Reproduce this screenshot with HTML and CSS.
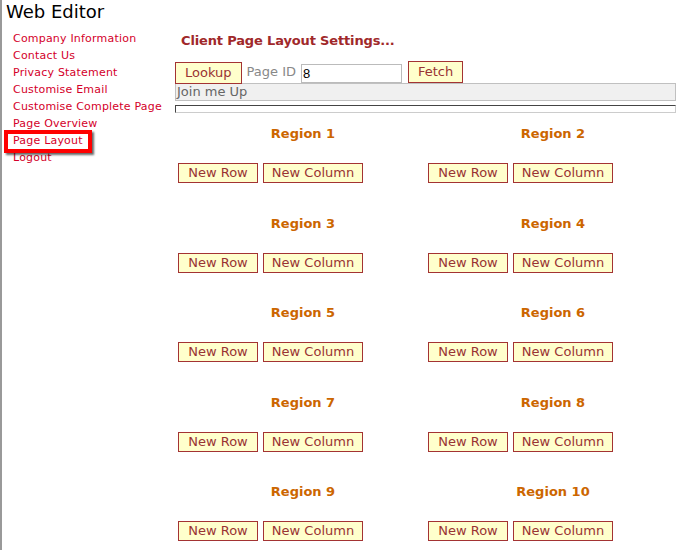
FILE: index.html
```html
<!DOCTYPE html>
<html lang="en">
<head>
  <meta charset="UTF-8">
  <title>Web Editor</title>
  <link rel="stylesheet" href="styles.css">
</head>
<body>
  <div class="page">
    <h1 class="site-title">Web Editor</h1>

    <div class="layout">
      <!-- side menu -->
      <ul class="menu">
        <li><a href="#">Company Information</a></li>
        <li><a href="#">Contact Us</a></li>
        <li><a href="#">Privacy Statement</a></li>
        <li><a href="#">Customise Email</a></li>
        <li><a href="#">Customise Complete Page</a></li>
        <li><a href="#">Page Overview</a></li>
        <li><a href="#" class="marked">Page Layout</a></li>
        <li><a href="#">Logout</a></li>
      </ul>

      <div class="main">
        <h2 class="heading">Client Page Layout Settings...</h2>

        <div class="toolbar">
          <button class="btn btn-lookup">Lookup</button>
          <span class="label">Page ID</span>
          <input class="page-id" type="text" value="8">
          <button class="btn btn-fetch">Fetch</button>
        </div>

        <div class="page-name">Join me Up</div>
        <div class="preview"></div>

        <!-- regions -->
        <div class="regions">
          <div class="region">
            <h3>Region 1</h3>
            <div class="region-btns"><button class="btn btn-row">New Row</button><button class="btn btn-col">New Column</button></div>
          </div>
          <div class="region">
            <h3>Region 2</h3>
            <div class="region-btns"><button class="btn btn-row">New Row</button><button class="btn btn-col">New Column</button></div>
          </div>
          <div class="region">
            <h3>Region 3</h3>
            <div class="region-btns"><button class="btn btn-row">New Row</button><button class="btn btn-col">New Column</button></div>
          </div>
          <div class="region">
            <h3>Region 4</h3>
            <div class="region-btns"><button class="btn btn-row">New Row</button><button class="btn btn-col">New Column</button></div>
          </div>
          <div class="region">
            <h3>Region 5</h3>
            <div class="region-btns"><button class="btn btn-row">New Row</button><button class="btn btn-col">New Column</button></div>
          </div>
          <div class="region">
            <h3>Region 6</h3>
            <div class="region-btns"><button class="btn btn-row">New Row</button><button class="btn btn-col">New Column</button></div>
          </div>
          <div class="region">
            <h3>Region 7</h3>
            <div class="region-btns"><button class="btn btn-row">New Row</button><button class="btn btn-col">New Column</button></div>
          </div>
          <div class="region">
            <h3>Region 8</h3>
            <div class="region-btns"><button class="btn btn-row">New Row</button><button class="btn btn-col">New Column</button></div>
          </div>
          <div class="region">
            <h3>Region 9</h3>
            <div class="region-btns"><button class="btn btn-row">New Row</button><button class="btn btn-col">New Column</button></div>
          </div>
          <div class="region">
            <h3>Region 10</h3>
            <div class="region-btns"><button class="btn btn-row">New Row</button><button class="btn btn-col">New Column</button></div>
          </div>
        </div>
      </div>
    </div>
  </div>
</body>
</html>
```

FILE: styles.css
```css
html, body {
  margin: 0;
  padding: 0;
  background-color: #fff;
  font-family: 'DejaVu Sans', Verdana, sans-serif;
}

.page {
  border-left: 2px solid #999;
  min-height: 550px;
  box-sizing: border-box;
}

.site-title {
  margin: 0;
  padding: 1px 0 0 4px;
  font-size: 18px;
  font-weight: normal;
  line-height: 21px;
  color: #000;
}

.layout {
  display: flex;
}

/* side menu */
.menu {
  list-style: none;
  margin: 0;
  padding: 8px 0 0 11px;
  width: 162px;
}

.menu li {
  font-size: 11px;
  line-height: 17px;
  letter-spacing: 0.2px;
}

.menu a {
  color: #d4002a;
  text-decoration: none;
}

.marked {
  position: relative;
  display: inline-block;
}

.marked::after {
  content: '';
  position: absolute;
  left: -9px;
  right: -9px;
  top: -2px;
  bottom: -4px;
  border: 4px solid #ff0000;
  box-shadow: 2px 2px 2px rgba(0,0,0,0.6);
}

.main {
  width: 501px;
}

.heading {
  margin: 11px 0 12px 6px;
  font-size: 13px;
  line-height: 16px;
  font-weight: bold;
  letter-spacing: -0.15px;
  color: #a0282a;
}

.btn {
  font-family: 'DejaVu Sans', Verdana, sans-serif;
  font-size: 13px;
  background-color: #ffffcc;
  color: #993333;
  border: 1px solid #a33333;
  border-radius: 0;
  padding: 0 9px;
  height: 20px;
  line-height: 18px;
  margin: 0;
}

.toolbar {
  display: flex;
  align-items: flex-start;
  height: 22px;
}

.btn-lookup {
  margin-top: 1px;
  height: 22px;
}

.btn-fetch {
  height: 22px;
  margin-left: 6px;
}

.label {
  margin: 2px 0 0 5px;
  font-size: 13px;
  line-height: 18px;
  color: #888;
}

.page-id {
  margin: 3px 0 0 5px;
  width: 101px;
  height: 19px;
  box-sizing: border-box;
  border: 1px solid #bbb;
  padding: 0 1px;
  font-family: 'Liberation Sans', Arial, sans-serif;
  font-size: 13px;
  color: #000;
}

.page-name {
  height: 18px;
  box-sizing: border-box;
  border: 1px solid #c0c0c0;
  background-color: #f0f0f0;
  padding-left: 1px;
  font-size: 13px;
  line-height: 16px;
  color: #666;
}

.preview {
  margin-top: 4px;
  height: 8px;
  box-sizing: border-box;
  border: 1px solid #ccc;
  border-top-color: #444;
  border-left-color: #444;
}

.regions {
  display: grid;
  grid-template-columns: 250px 250px;
  margin-left: 3px;
}

.region {
  padding: 13px 0 19.5px 0;
}

.region h3 {
  margin: 0 0 21px 0;
  font-size: 13px;
  line-height: 16px;
  font-weight: bold;
  text-align: center;
  color: #cc6600;
}

.region-btns {
  display: flex;
  gap: 5px;
}

.region-btns .btn {
  padding: 0;
}

.btn-row {
  width: 80px;
}

.btn-col {
  width: 100px;
}
```
